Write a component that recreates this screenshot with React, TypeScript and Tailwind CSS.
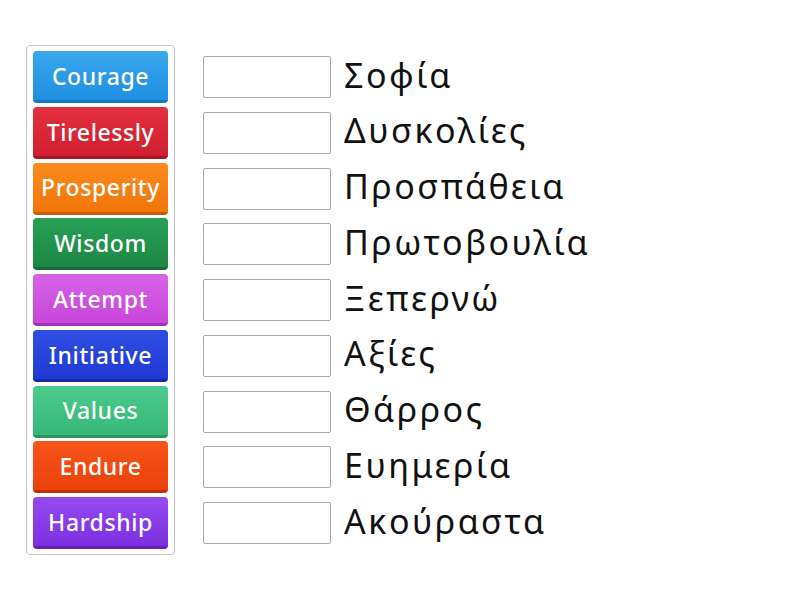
const cards = [
  { label: "Courage", cls: "bg-[linear-gradient(#3aa7ee,#1f8fe0)] border-[#1877c0]" },
  { label: "Tirelessly", cls: "bg-[linear-gradient(#e2303f,#cf1f30)] border-[#a51523]" },
  { label: "Prosperity", cls: "bg-[linear-gradient(#fb8a1c,#f2760a)] border-[#c75c06]" },
  { label: "Wisdom", cls: "bg-[linear-gradient(#27a055,#1d8745)] border-[#146b35]" },
  { label: "Attempt", cls: "bg-[linear-gradient(#d563e6,#c746da)] border-[#a234b5]" },
  { label: "Initiative", cls: "bg-[linear-gradient(#2f4ee4,#2038d2)] border-[#1828a8]" },
  { label: "Values", cls: "bg-[linear-gradient(#4ccb8c,#35b877)] border-[#27975f]" },
  { label: "Endure", cls: "bg-[linear-gradient(#f8541a,#ea420a)] border-[#bf3205]" },
  { label: "Hardship", cls: "bg-[linear-gradient(#944af0,#7d2fe0)] border-[#6322b8]" },
]

const words = [
  "Σοφία",
  "Δυσκολίες",
  "Προσπάθεια",
  "Πρωτοβουλία",
  "Ξεπερνώ",
  "Αξίες",
  "Θάρρος",
  "Ευημερία",
  "Ακούραστα",
]

export default function App() {
  return (
    <div className="flex h-[600px] w-[800px] items-start bg-white pl-[26px] pt-[45px]">
      {/* Cards */}
      <div className="flex w-[149px] flex-col gap-[3.75px] rounded-[4px] border border-[#c4c4c4] px-[6px] py-[5px]">
        {cards.map((c) => (
          <div
            key={c.label}
            className={`flex h-[52px] items-center justify-center rounded-[4px] border-b-[3px] pt-[1px] text-[23px] font-medium tracking-[0.6px] text-white font-['Noto_Sans',sans-serif] ${c.cls}`}
          >
            {c.label}
          </div>
        ))}
      </div>

      {/* Targets */}
      <div className="ml-[28px] mt-[6px] flex flex-col gap-[3.75px]">
        {words.map((w) => (
          <div key={w} className="flex h-[52px] items-center">
            <div className="h-[42px] w-[128px] rounded-[2px] border border-[#a8a8a8] bg-white" />
            <span className="ml-[13px] pb-[4px] text-[34px] tracking-[2.5px] text-[#111] font-['Noto_Sans',sans-serif]">
              {w}
            </span>
          </div>
        ))}
      </div>
    </div>
  )
}
